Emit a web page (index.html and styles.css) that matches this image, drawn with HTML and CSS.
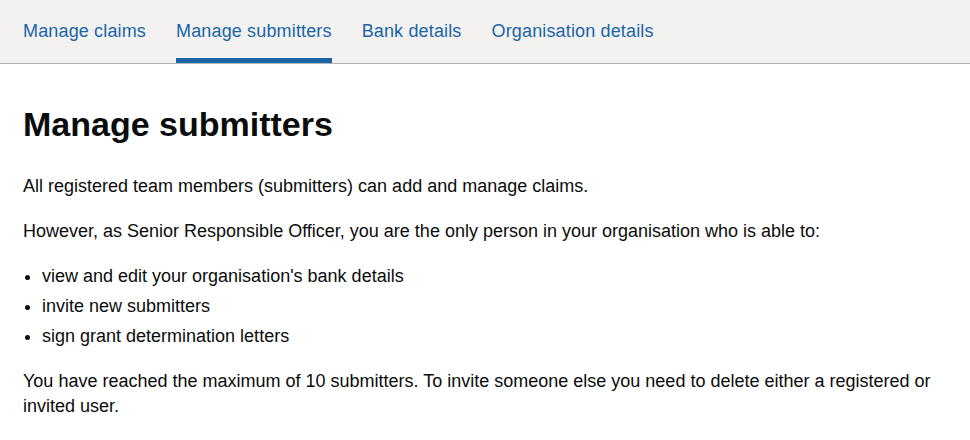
FILE: index.html
```html
<!DOCTYPE html>
<html lang="en">
<head>
<meta charset="utf-8">
<title>Manage submitters</title>
<link rel="stylesheet" href="styles.css">
</head>
<body>
<nav class="sub-nav" aria-label="Sub navigation">
  <ul class="sub-nav__list">
    <li class="sub-nav__item"><a class="sub-nav__link" href="#">Manage claims</a></li>
    <li class="sub-nav__item"><a class="sub-nav__link sub-nav__link--active" href="#" aria-current="page">Manage submitters</a></li>
    <li class="sub-nav__item"><a class="sub-nav__link" href="#">Bank details</a></li>
    <li class="sub-nav__item"><a class="sub-nav__link" href="#">Organisation details</a></li>
  </ul>
</nav>
<main class="main">
  <h1 class="heading-l">Manage submitters</h1>
  <p class="body">All registered team members (submitters) can add and manage claims.</p>
  <p class="body">However, as Senior Responsible Officer, you are the only person in your organisation who is able to:</p>
  <ul class="bullets">
    <li>view and edit your organisation's bank details</li>
    <li>invite new submitters</li>
    <li>sign grant determination letters</li>
  </ul>
  <p class="body">You have reached the maximum of 10 submitters. To invite someone else you need to delete either a registered or invited user.</p>
</main>
</body>
</html>
```
FILE: styles.css
```css
html, body {
  margin: 0;
  padding: 0;
  background: #ffffff;
}
body {
  font-family: "Liberation Sans", Arial, sans-serif;
  color: #0b0c0c;
  -webkit-font-smoothing: antialiased;
}
.sub-nav {
  background: #f3f2f1;
  border-bottom: 1px solid #b1b4b6;
}
.sub-nav__list {
  list-style: none;
  margin: 0;
  padding: 0 0 0 23px;
  display: flex;
  gap: 30px;
}
.sub-nav__link {
  display: block;
  padding: 19px 0 14px;
  border-bottom: 5px solid transparent;
  font-size: 18px;
  line-height: 25px;
  letter-spacing: 0.15px;
  color: #1a65a6;
  text-decoration: none;
}
.sub-nav__link--active {
  border-bottom-color: #1a65a6;
}
.main {
  padding: 40px 23px 0;
}
.heading-l {
  margin: 0 0 30px;
  font-size: 34px;
  line-height: 40px;
  font-weight: 700;
}
.body {
  margin: 0 0 20px;
  font-size: 18px;
  line-height: 25px;
}
.bullets {
  margin: 0 0 20px;
  padding: 0 0 0 19px;
  font-size: 18px;
  line-height: 25px;
}
.bullets li {
  margin-bottom: 5px;
}
```
